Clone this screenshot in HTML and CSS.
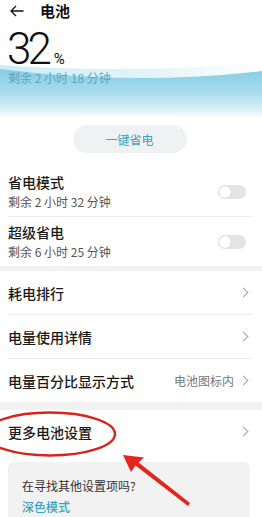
FILE: index.html
```html
<!DOCTYPE html>
<html lang="zh-CN">
<head>
<meta charset="utf-8">
<title>电池</title>
<link rel="stylesheet" href="styles.css">
</head>
<body>
<div class="page">
  <section class="hero">
    <svg class="wave" width="262" height="56" viewBox="0 0 262 56">
      <defs>
        <linearGradient id="wg" x1="0" y1="0" x2="0" y2="1">
          <stop offset="0" stop-color="#86cde3"/>
          <stop offset="0.45" stop-color="#a6dbec"/>
          <stop offset="0.8" stop-color="#d3eef7"/>
          <stop offset="1" stop-color="#ffffff"/>
        </linearGradient>
        <linearGradient id="hg" x1="0" y1="0" x2="1" y2="0">
          <stop offset="0" stop-color="#c9ecf6"/>
          <stop offset="0.6" stop-color="#e4f5fa"/>
          <stop offset="1" stop-color="#ffffff"/>
        </linearGradient>
      </defs>
      <path d="M0 3 Q120 12 262 1 L262 56 L0 56 Z" fill="url(#hg)"/>
      <path d="M0 7 Q131 24 262 9 L262 56 L0 56 Z" fill="url(#wg)"/>
    </svg>
    <header class="topbar">
      <svg class="back" width="14" height="12" viewBox="0 0 14 12"><path d="M13.5 6 H1 M6 1 L1 6 L6 11" fill="none" stroke="#111" stroke-width="1.3"/></svg>
      <h1 class="title">电池</h1>
    </header>
    <div class="level"><span class="num">32</span><span class="pct">%</span></div>
    <div class="remain">剩余 2 小时 18 分钟</div>
  </section>

  <div class="save-wrap"><div class="save">一键省电</div></div>

  <div class="group">
    <div class="row tall">
      <div class="texts">
        <div class="name">省电模式</div>
        <div class="sub">剩余 2 小时 32 分钟</div>
      </div>
      <span class="toggle"><span class="knob"></span></span>
    </div>
    <div class="divider"></div>
    <div class="row tall">
      <div class="texts">
        <div class="name">超级省电</div>
        <div class="sub">剩余 6 小时 25 分钟</div>
      </div>
      <span class="toggle"><span class="knob"></span></span>
    </div>
  </div>

  <div class="band band-a"></div>

  <div class="group">
    <div class="row link"><span class="name">耗电排行</span><span class="chev"></span></div>
    <div class="divider"></div>
    <div class="row link"><span class="name">电量使用详情</span><span class="chev"></span></div>
    <div class="divider"></div>
    <div class="row link"><span class="name">电量百分比显示方式</span><span class="value">电池图标内</span><span class="chev"></span></div>
  </div>

  <div class="band band-b"></div>

  <div class="group">
    <div class="row link"><span class="name">更多电池设置</span><span class="chev"></span></div>
  </div>

  <div class="card">
    <div class="card-q">在寻找其他设置项吗?</div>
    <div class="card-link">深色模式</div>
  </div>

  <svg class="annot" width="262" height="517" viewBox="0 0 262 517">
    <ellipse cx="50" cy="434" rx="65" ry="21.5" fill="none" stroke="#d8251c" stroke-width="2.4"/>
    <polygon points="123,455 144,457.5 138.5,462.5 190,503 188,506 135.5,465.5 131,472" fill="#e2261c"/>
  </svg>
</div>
</body>
</html>
```

FILE: styles.css
```css
* { box-sizing: border-box; }
html, body { margin: 0; padding: 0; background: #fff; }
body {
  font-family: "Noto Sans CJK SC", "Noto Sans", sans-serif;
  color: #1a1a1a;
  width: 262px;
  overflow: hidden;
}
.page { position: relative; width: 262px; height: 517px; overflow: hidden; }

.hero { position: relative; height: 115px; }
.wave { position: absolute; left: 0; top: 62px; z-index: 0; display: block; }
.topbar, .level, .remain { position: relative; z-index: 1; }

.topbar { height: 22px; display: flex; align-items: center; padding-left: 10px; gap: 16px; }
.back { display: block; margin-top: -1px; }
.title { margin: 0; font-size: 15px; font-weight: 700; line-height: 22px; color: #111; }

.level { margin-top: 5px; height: 44px; display: flex; align-items: baseline; padding-left: 7px; }
.num { font-family: Roboto, "Noto Sans", sans-serif; font-weight: 300; font-size: 44px; line-height: 44px; letter-spacing: -4px; color: #111; }
.pct { font-family: Roboto, "Noto Sans", sans-serif; font-weight: 400; font-size: 15px; line-height: 18px; margin-left: 6px; color: #111; }
.remain { padding-left: 8px; font-size: 12px; line-height: 14px; color: #5ea6bf; }

.save-wrap { display: flex; justify-content: center; padding: 10px 0 14px; }
.save {
  width: 114px; height: 28px; border-radius: 14px; background: #f0f1f3;
  display: flex; align-items: center; justify-content: center;
  font-size: 12px; color: #35a3c4; margin-left: -3px;
}

.row { display: flex; align-items: center; padding-left: 8px; }
.row.tall { height: 49px; padding-right: 16px; }
.row.link { height: 43px; padding-right: 14px; }
.texts { flex: 1; display: flex; flex-direction: column; }
.name { font-size: 14px; line-height: 18px; font-weight: 500; color: #1a1a1a; }
.row.link .name { flex: 1; }
.sub { font-size: 12px; line-height: 16px; margin-top: 3px; color: #555; }
.value { font-size: 12px; color: #777; margin-right: 6px; }
.chev {
  width: 7px; height: 7px; border-top: 1.2px solid #a0a0a0; border-right: 1.2px solid #a0a0a0;
  transform: rotate(45deg); margin-right: 1px;
}
.divider { height: 1px; background: #ececec; margin: 0 10px 0 8px; }

.toggle {
  width: 28px; height: 14px; border-radius: 7px; background: #e4e4e4; position: relative;
  display: inline-block;
}
.knob {
  position: absolute; left: 1px; top: 1px; width: 12px; height: 12px; border-radius: 50%;
  background: #fff; box-shadow: 0 0 1px rgba(0,0,0,0.25);
}

.band { background: #f2f2f2; }
.band-a { height: 5px; }
.band-b { height: 8px; }

.card {
  margin: 9px 12px 0 8px; background: #f2f2f2; border-radius: 6px;
  padding: 16px 14px 10px;
}
.card-q { font-size: 12px; line-height: 16px; color: #333; }
.card-link { font-size: 12px; line-height: 16px; margin-top: 5px; color: #35a3c4; font-weight: 500; }

.annot { position: absolute; left: 0; top: 0; pointer-events: none; }
```
